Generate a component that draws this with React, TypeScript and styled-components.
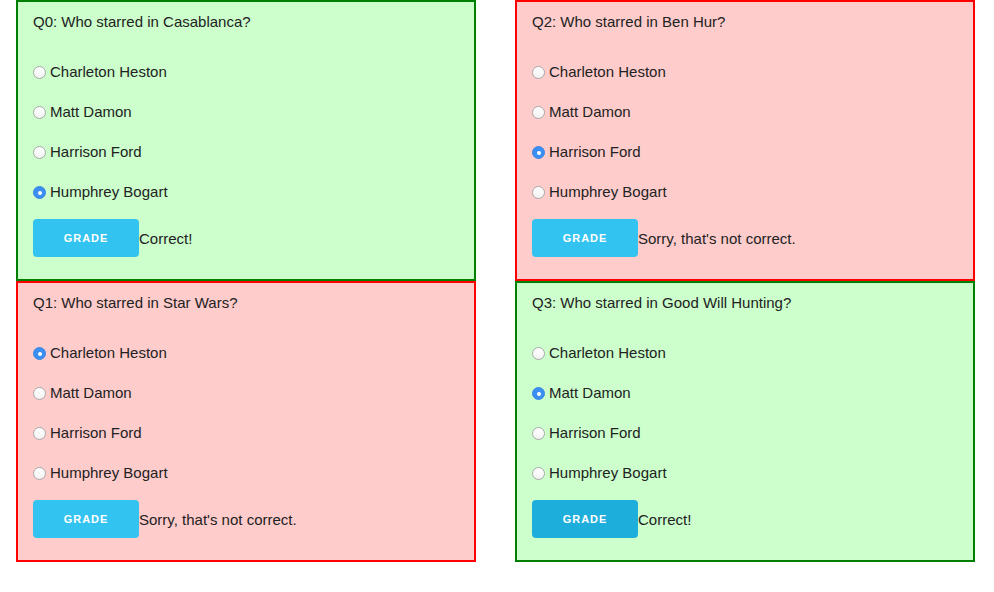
import React from "react";
import styled, { createGlobalStyle } from "styled-components";

const Global = createGlobalStyle`
  html, body { margin: 0; padding: 0; background: #fff; }
  body { font-family: "Liberation Sans", Arial, Helvetica, sans-serif; color: #222; }
`;

const Grid = styled.div`
  display: grid;
  grid-template-columns: 460px 460px;
  grid-auto-flow: column;
  grid-template-rows: 281px 281px;
  column-gap: 39px;
  padding-left: 16px;
`;

const Card = styled.div<{ $ok: boolean }>`
  box-sizing: border-box;
  height: 100%;
  border: 2px solid ${(p) => (p.$ok ? "#008000" : "#ff0000")};
  background: ${(p) => (p.$ok ? "#ccffcc" : "#ffcccc")};
  padding: 12px 15px 0 15px;
  display: flex;
  flex-direction: column;
`;

const Title = styled.div`
  font-size: 15px;
  line-height: 16px;
  height: 16px;
  margin-bottom: 32px;
`;

const Options = styled.div`
  display: flex;
  flex-direction: column;
  gap: 20px;
`;

const Option = styled.label`
  display: flex;
  align-items: center;
  height: 20px;
  font-size: 15px;
  line-height: 20px;
`;

const Radio = styled.span<{ $on: boolean }>`
  box-sizing: border-box;
  width: 13px;
  height: 13px;
  border-radius: 50%;
  margin: 1px 4px 0 0;
  flex: none;
  position: relative;
  background: ${(p) => (p.$on ? "#3b8ff3" : "linear-gradient(#fff, #f2f2f2)")};
  border: 1px solid ${(p) => (p.$on ? "#3a86e6" : "#a9a9a9")};
  &::after {
    content: "";
    display: ${(p) => (p.$on ? "block" : "none")};
    position: absolute;
    left: 50%;
    top: 50%;
    width: 4px;
    height: 4px;
    margin: -2px 0 0 -2px;
    border-radius: 50%;
    background: #fff;
  }
`;

const Footer = styled.div`
  display: flex;
  align-items: center;
  margin-top: 17px;
`;

const Button = styled.button<{ $active: boolean }>`
  height: 38px;
  width: 106px;
  padding: 0;
  border: none;
  border-radius: 4px;
  background: ${(p) => (p.$active ? "#1eaedb" : "#33c3f0")};
  color: #fff;
  font-family: "Liberation Sans", Arial, Helvetica, sans-serif;
  font-size: 11px;
  font-weight: 700;
  letter-spacing: 1px;
  text-transform: uppercase;
  cursor: pointer;
`;

const Result = styled.span`
  font-size: 15px;
`;

const choices = ["Charleton Heston", "Matt Damon", "Harrison Ford", "Humphrey Bogart"];

const questions = [
  { id: 0, movie: "Casablanca", pick: 3, ok: true, active: false },
  { id: 1, movie: "Star Wars", pick: 0, ok: false, active: false },
  { id: 2, movie: "Ben Hur", pick: 2, ok: false, active: false },
  { id: 3, movie: "Good Will Hunting", pick: 1, ok: true, active: true },
];

export default function App() {
  return (
    <>
      <Global />
      <Grid>
        {questions.map((q) => (
          <Card key={q.id} $ok={q.ok}>
            <Title>
              Q{q.id}: Who starred in {q.movie}?
            </Title>
            <Options>
              {choices.map((c, i) => (
                <Option key={c}>
                  <Radio $on={i === q.pick} />
                  {c}
                </Option>
              ))}
            </Options>
            <Footer>
              <Button $active={q.active}>Grade</Button>
              <Result>{q.ok ? "Correct!" : "Sorry, that's not correct."}</Result>
            </Footer>
          </Card>
        ))}
      </Grid>
    </>
  );
}
